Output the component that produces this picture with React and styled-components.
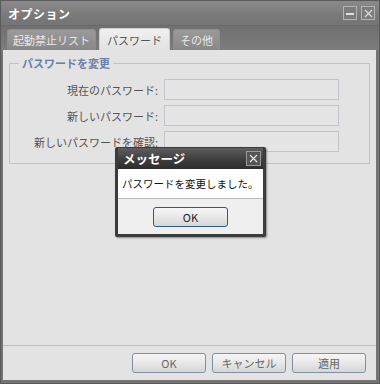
import React from 'react';
import styled, { createGlobalStyle } from 'styled-components';

const GlobalStyle = createGlobalStyle`
  html, body {
    margin: 0;
    padding: 0;
    background: #6d6d6d;
  }
  body {
    font-family: "Noto Sans CJK JP", "DejaVu Sans", sans-serif;
    font-size: 11px;
  }
`;

// ウィンドウ全体
const Window = styled.div`
  position: relative;
  width: 380px;
  height: 384px;
  box-sizing: border-box;
  display: flex;
  flex-direction: column;
  background: #747474;
  border: 1px solid #5a5a5a;
  overflow: hidden;
`;

const TitleBar = styled.div`
  height: 24px;
  display: flex;
  align-items: center;
  padding: 0 4px 0 7px;
  background: linear-gradient(#8a8a8a, #7a7a7a 60%, #747474);
  border-bottom: 1px solid #6a6a6a;
`;

const Title = styled.div`
  flex: 1;
  color: #fff;
  font-weight: bold;
  font-size: 12px;
  letter-spacing: 0.5px;
`;

const TitleButton = styled.div`
  width: 12px;
  height: 12px;
  margin-left: 4px;
  border: 1px solid #b4b4b4;
  display: flex;
  align-items: center;
  justify-content: center;
  background: #7c7c7c;
`;

const TabStrip = styled.div`
  height: 24px;
  display: flex;
  align-items: flex-end;
  gap: 3px;
  padding-left: 6px;
  background: linear-gradient(#707070, #7c7c7c);
`;

const Tab = styled.div`
  height: ${p => (p.active ? 22 : 21)}px;
  padding: 0 ${p => p.pad}px;
  display: flex;
  align-items: center;
  box-sizing: border-box;
  border-radius: 3px 3px 0 0;
  border: 1px solid ${p => (p.active ? '#cfcfcf' : '#8e8e8e')};
  border-bottom: none;
  color: ${p => (p.active ? '#555' : '#e8e8e8')};
  background: ${p => (p.active ? 'linear-gradient(#f0f0f0, #e2e2e2)' : 'linear-gradient(#9a9a9a, #888)')};
  font-size: 11px;
`;

const Content = styled.div`
  flex: 1;
  margin: 0 3px 3px 2px;
  background: #e3e3e3;
  display: flex;
  flex-direction: column;
`;

const Group = styled.fieldset`
  margin: 5px 6px 0 6px;
  padding: 8px 0 11px 0;
  border: 1px solid #c3c3cb;
  display: grid;
  grid-template-columns: 148px 175px;
  column-gap: 6px;
  row-gap: 5px;
  align-items: center;
`;

const Legend = styled.legend`
  color: #6a7fa8;
  font-weight: bold;
  font-size: 11px;
  padding: 0 3px;
  margin-left: 9px;
`;

const Label = styled.label`
  text-align: right;
  color: #555;
  font-size: 11px;
  white-space: nowrap;
`;

const Input = styled.div`
  height: 21px;
  box-sizing: border-box;
  border: 1px solid #c3c3cb;
  background: #e5e5e5;
`;

const Spacer = styled.div`
  flex: 1;
`;

const Footer = styled.div`
  border-top: 1px solid #bdbdbd;
  height: 34px;
  display: flex;
  align-items: center;
  justify-content: flex-end;
  gap: 6px;
  padding-right: 10px;
`;

const Button = styled.div`
  width: ${p => p.w || 74}px;
  height: 20px;
  box-sizing: border-box;
  border: 1px solid ${p => (p.primary ? '#2c5a94' : '#8290a4')};
  border-radius: 3px;
  background: linear-gradient(#f6f6f6, #e8e8e8 50%, #d6d6d6);
  display: flex;
  align-items: center;
  justify-content: center;
  color: ${p => (p.primary ? '#222' : '#666')};
  font-size: 11px;
`;

// メッセージダイアログ
const Dialog = styled.div`
  position: absolute;
  left: 114px;
  top: 146px;
  width: 151px;
  height: 90px;
  box-sizing: border-box;
  border: 3px solid #3c3c3c;
  border-top-width: 1px;
  border-radius: 2px;
  background: #efefef;
  display: flex;
  flex-direction: column;
  box-shadow: 1px 1px 2px rgba(0, 0, 0, 0.4);
`;

const DialogTitle = styled.div`
  height: 21px;
  display: flex;
  align-items: center;
  padding: 0 2px 0 5px;
  background: linear-gradient(#5e5e5e, #3e3e3e 55%, #2c2c2c);
  color: #fff;
  font-weight: bold;
  font-size: 12.5px;
`;

const DialogClose = styled.div`
  margin-left: auto;
  width: 13px;
  height: 13px;
  border: 1px solid #9a9a9a;
  background: #555;
  display: flex;
  align-items: center;
  justify-content: center;
`;

const DialogBody = styled.div`
  height: 29px;
  background: #fff;
  border-bottom: 1px solid #bcbcbc;
  display: flex;
  align-items: center;
  padding-left: 4px;
  color: #111;
  font-size: 10.5px;
  white-space: nowrap;
`;

const DialogFooter = styled.div`
  flex: 1;
  display: flex;
  align-items: center;
  justify-content: center;
`;

const CrossIcon = ({ color }) => (
  <svg width="9" height="9" viewBox="0 0 9 9">
    <path d="M1 1L8 8M8 1L1 8" stroke={color} strokeWidth="1.2" />
  </svg>
);

const App = () => {
  return (
    <>
      <GlobalStyle />
      <Window>
        <TitleBar>
          <Title>オプション</Title>
          <TitleButton>
            <svg width="8" height="8" viewBox="0 0 8 8">
              <rect x="0" y="4" width="8" height="2" fill="#e0e0e0" />
            </svg>
          </TitleButton>
          <TitleButton>
            <CrossIcon color="#dcdcdc" />
          </TitleButton>
        </TitleBar>
        <TabStrip>
          <Tab pad={5}>起動禁止リスト</Tab>
          <Tab pad={7} active>パスワード</Tab>
          <Tab pad={6}>その他</Tab>
        </TabStrip>
        <Content>
          <Group>
            <Legend>パスワードを変更</Legend>
            <Label>現在のパスワード:</Label>
            <Input />
            <Label>新しいパスワード:</Label>
            <Input />
            <Label>新しいパスワードを確認:</Label>
            <Input />
          </Group>
          <Spacer />
          <Footer>
            <Button>OK</Button>
            <Button>キャンセル</Button>
            <Button>適用</Button>
          </Footer>
        </Content>

        <Dialog>
          <DialogTitle>
            メッセージ
            <DialogClose>
              <CrossIcon color="#e8e8e8" />
            </DialogClose>
          </DialogTitle>
          <DialogBody>パスワードを変更しました。</DialogBody>
          <DialogFooter>
            <Button primary w={75}>OK</Button>
          </DialogFooter>
        </Dialog>
      </Window>
    </>
  );
};

export default App;
